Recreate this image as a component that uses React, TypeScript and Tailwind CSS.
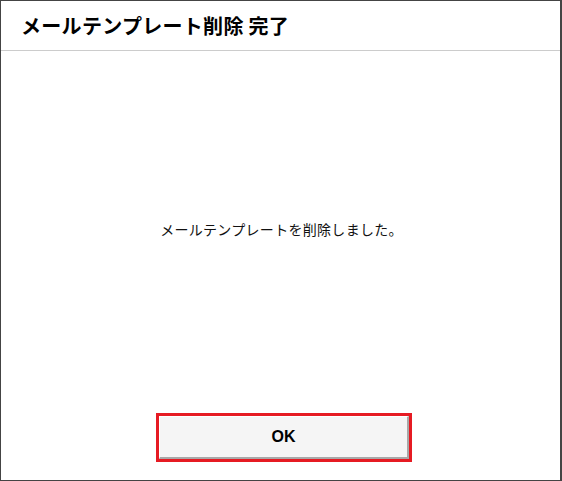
export default function App() {
  return (
    <div
      className="w-[562px] h-[481px] bg-white border-[#444444] border-t border-l border-b border-r-2 flex flex-col text-black"
      style={{ fontFamily: '"Noto Sans CJK JP", "Noto Sans", sans-serif' }}
    >
      <div className="h-[50px] shrink-0 border-b border-[#cccccc] flex items-center pl-5">
        <h1 className="text-[20px] font-bold leading-none tracking-[0.3px]">
          メールテンプレート削除 完了
        </h1>
      </div>
      <div className="flex-1 flex items-center justify-center pb-[6px] pl-[2px]">
        <p className="text-[14px] leading-none text-[#111] tracking-[0.3px]">
          メールテンプレートを削除しました。
        </p>
      </div>
      <div className="flex justify-center pb-[18px] pl-[7px]">
        <div className="border-[3px] border-[#e61b23]">
          <button
            className="w-[250px] h-[43px] bg-[#f5f5f5] border-t border-l border-white border-r-2 border-b-2 border-r-[#a8a8a8] border-b-[#a8a8a8] flex items-center justify-center text-[16px] font-bold"
            style={{ fontFamily: '"Liberation Sans", Arial, sans-serif' }}
          >
            OK
          </button>
        </div>
      </div>
    </div>
  );
}
